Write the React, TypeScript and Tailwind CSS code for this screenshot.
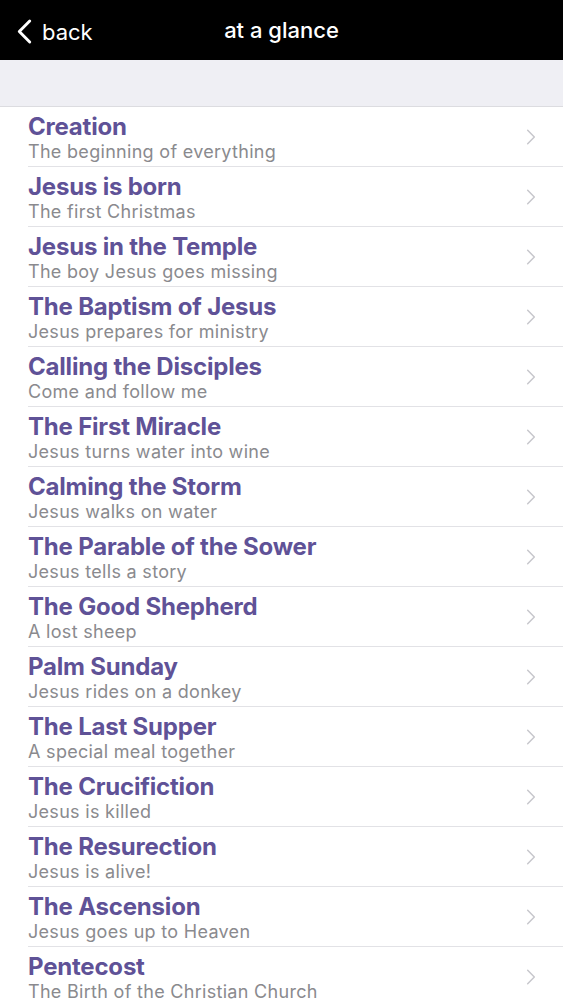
import React from 'react';

const stories = [
  { title: 'Creation', subtitle: 'The beginning of everything' },
  { title: 'Jesus is born', subtitle: 'The first Christmas' },
  { title: 'Jesus in the Temple', subtitle: 'The boy Jesus goes missing' },
  { title: 'The Baptism of Jesus', subtitle: 'Jesus prepares for ministry' },
  { title: 'Calling the Disciples', subtitle: 'Come and follow me' },
  { title: 'The First Miracle', subtitle: 'Jesus turns water into wine' },
  { title: 'Calming the Storm', subtitle: 'Jesus walks on water' },
  { title: 'The Parable of the Sower', subtitle: 'Jesus tells a story' },
  { title: 'The Good Shepherd', subtitle: 'A lost sheep' },
  { title: 'Palm Sunday', subtitle: 'Jesus rides on a donkey' },
  { title: 'The Last Supper', subtitle: 'A special meal together' },
  { title: 'The Crucifiction', subtitle: 'Jesus is killed' },
  { title: 'The Resurection', subtitle: 'Jesus is alive!' },
  { title: 'The Ascension', subtitle: 'Jesus goes up to Heaven' },
  { title: 'Pentecost', subtitle: 'The Birth of the Christian Church' },
];

const Chevron = ({ className }: { className?: string }) => (
  <svg viewBox="0 0 12 20" className={className} fill="none" stroke="currentColor" strokeLinecap="round" strokeLinejoin="round">
    <path d="M2 2l8 8-8 8" />
  </svg>
);

export default function App() {
  return (
    <div className="w-[563px] h-[1000px] overflow-hidden bg-white font-['Inter',sans-serif]">
      <header className="h-[60px] bg-black flex items-center relative">
        <div className="flex items-center pl-[16px] gap-[9px] text-white pt-[3px]">
          <svg viewBox="0 0 14 24" className="w-[17px] h-[25px]" fill="none" stroke="currentColor" strokeWidth={2.8} strokeLinecap="round" strokeLinejoin="round">
            <path d="M12 2L2 12l10 10" />
          </svg>
          <span className="text-[22px] leading-none">back</span>
        </div>
        <h1 className="absolute left-0 right-0 text-center text-white text-[22px] font-medium leading-none pointer-events-none">
          at a glance
        </h1>
      </header>
      <div className="h-[47px] bg-[#efeff4] border-b border-[#dcdce0]" />
      <ul>
        {stories.map((s) => (
          <li key={s.title} className="pl-[28px]">
            <div className="h-[60px] flex items-center border-b border-[#e2e2e6] pr-[27px]">
              <div className="flex-1 flex flex-col pt-[3px]">
                <span className="text-[24px] leading-[27px] font-bold text-[#5f5297] tracking-[-0.2px]">{s.title}</span>
                <span className="text-[18px] leading-[24px] text-[#8a8a8e] tracking-[0.3px]">{s.subtitle}</span>
              </div>
              <Chevron className="w-[10px] h-[18px] text-[#c7c7cc] stroke-[1.8]" />
            </div>
          </li>
        ))}
      </ul>
    </div>
  );
}
